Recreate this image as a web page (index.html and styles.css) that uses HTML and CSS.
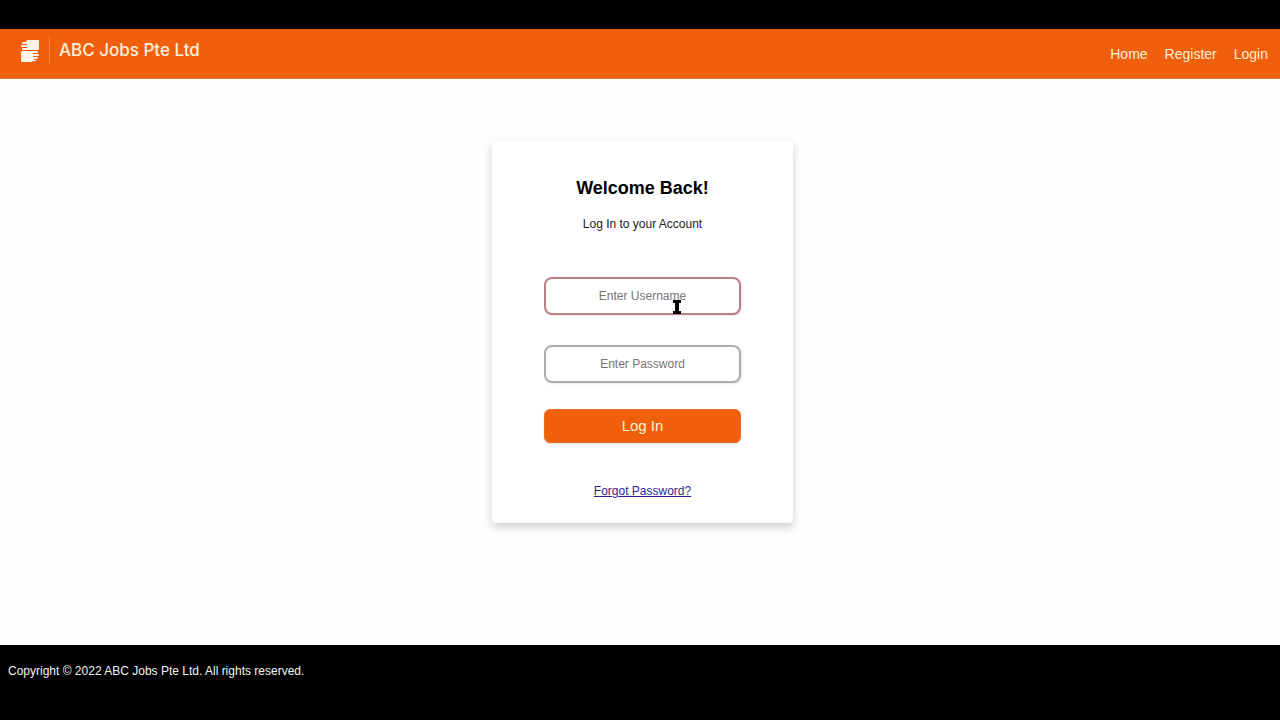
FILE: index.html
```html
<!DOCTYPE html>
<html lang="en">
<head>
<meta charset="utf-8">
<title>ABC Jobs Pte Ltd - Log In</title>
<meta name="viewport" content="width=device-width, initial-scale=1">
<link rel="stylesheet" href="styles.css">
</head>
<body>
<header class="header">
  <a class="brand" href="#">
    <svg class="brand-mark" viewBox="0 0 20 24" aria-hidden="true">
      <path d="M7 1H18Q19 1 19 2V10Q19 11 18 11H3Q2 11 2 10Q2 9 3 9H7V8H2Q1 8 1 7Q1 6 2 6H7V5H3Q2 5 2 4Q2 3 3 3H6Z"/>
      <path d="M2 12H16Q18 12 18 13Q18 14 17 14H13V15H18Q19 15 19 16Q19 17 18 17H13V18H17Q18 18 18 19Q18 20 17 20H14V21H16V22H13L12 23H2Q1 23 1 22V13Q1 12 2 12Z"/>
    </svg>
    <span class="brand-name">ABC Jobs Pte Ltd</span>
  </a>
  <nav class="nav">
    <a href="#">Home</a>
    <a href="#">Register</a>
    <a href="#">Login</a>
  </nav>
</header>
<main class="main">
  <form class="card">
    <h1 class="title">Welcome Back!</h1>
    <p class="subtitle">Log In to your Account</p>
    <div class="field">
      <input class="input input-active" type="text" placeholder="Enter Username" aria-label="Username">
      <svg class="cursor" viewBox="0 0 10 14" aria-hidden="true"><path d="M1 0H9V3H7V11H9V14H1V11H3V3H1Z"/></svg>
    </div>
    <div class="field">
      <input class="input" type="password" placeholder="Enter Password" aria-label="Password">
    </div>
    <button class="submit" type="button">Log In</button>
    <a class="forgot" href="#">Forgot Password?</a>
  </form>
</main>
<footer class="footer">Copyright © 2022 ABC Jobs Pte Ltd. All rights reserved.</footer>
</body>
</html>
```
FILE: styles.css
```css
* {
  box-sizing: border-box;
}

body {
  margin: 0;
  min-height: 100vh;
  display: flex;
  flex-direction: column;
  border-top: 29px solid #000;
  background: #fefefe;
  font-family: "Liberation Sans", Arial, sans-serif;
  font-size: 12px;
}

.header {
  display: flex;
  justify-content: space-between;
  align-items: center;
  padding: 8px 12px 14px 20px;
  background: #ef5f0c;
  border-bottom: 1px solid #d9762f;
}

.brand {
  display: flex;
  align-items: center;
  gap: 9px;
  color: #fff0dc;
  text-decoration: none;
}

.brand-mark {
  width: 20px;
  height: 24px;
  fill: #fff4ea;
}

.brand-name {
  padding-left: 9px;
  border-left: 1px solid #f68c4d;
  font-family: Inter, sans-serif;
  font-size: 17px;
  font-weight: 500;
  line-height: 27px;
}

.nav {
  display: flex;
  gap: 17px;
  padding-top: 6px;
}

.nav a {
  color: #fff0dc;
  font-size: 14px;
  line-height: 18px;
  text-decoration: none;
}

.main {
  flex: 1;
  padding: 62px 0 64px 5px;
}

.card {
  display: flex;
  flex-direction: column;
  align-items: center;
  width: 301px;
  margin: 0 auto;
  padding: 36px 52px 24px;
  border-radius: 4px;
  background: #fff;
  box-shadow: 0 4px 10px rgba(0, 0, 0, 0.2);
}

.title {
  margin: 0 0 17px;
  color: #000;
  font-size: 18px;
  line-height: 22px;
}

.subtitle {
  margin: 0 0 45px;
  color: #222;
  line-height: 16px;
}

.field {
  position: relative;
  width: 100%;
  margin-bottom: 30px;
}

.input {
  display: block;
  width: 100%;
  height: 38px;
  padding: 0 10px;
  border: 2px solid #acacaf;
  border-radius: 8px;
  background: #fff;
  box-shadow: 1px 1px 2px rgba(0, 0, 0, 0.1);
  font-family: inherit;
  font-size: 12px;
  text-align: center;
}

.input::placeholder {
  color: #757575;
}

.input-active {
  border-color: #b97f86;
}

.cursor {
  position: absolute;
  left: 128px;
  top: 23px;
  width: 10px;
  height: 14px;
}

.submit {
  width: 100%;
  height: 34px;
  margin: -4px 0 40px;
  padding: 0 0 2px;
  border: 1px solid #e8712a;
  border-radius: 6px;
  background: #ef5f0c;
  box-shadow: 0 1px 2px rgba(0, 0, 0, 0.15);
  color: #fff0dc;
  font-family: inherit;
  font-size: 15px;
}

.forgot {
  color: #2a1f9c;
  line-height: 16px;
}

.footer {
  min-height: 75px;
  padding: 18px 8px;
  background: #000;
  color: #f2f2f2;
  line-height: 16px;
}
```
